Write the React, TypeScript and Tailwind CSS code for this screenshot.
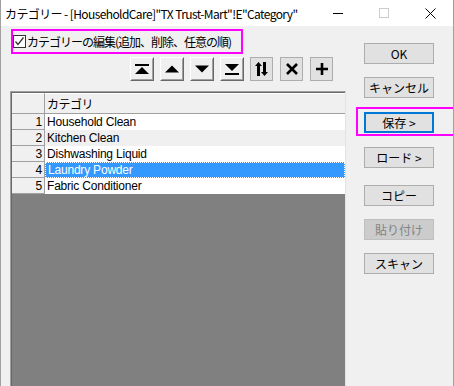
import React from "react";

const rows = [
  "Household Clean",
  "Kitchen Clean",
  "Dishwashing Liquid",
  "Laundry Powder",
  "Fabric Conditioner",
];

function RaisedBtn({ children }: { children: React.ReactNode }) {
  return (
    <div className="w-[24px] h-[24px] border border-t-white border-l-white border-r-[#696969] border-b-[#696969] bg-[#f0f0f0]">
      <div className="w-full h-full border border-t-[#f0f0f0] border-l-[#f0f0f0] border-r-[#a0a0a0] border-b-[#a0a0a0] flex items-center justify-center">
        {children}
      </div>
    </div>
  );
}

function FlatBtn({ children }: { children: React.ReactNode }) {
  return (
    <div className="w-[23px] h-[24px] border border-[#adadad] bg-[#e1e1e1] flex items-center justify-center">
      {children}
    </div>
  );
}

function SideBtn({
  label,
  disabled,
}: {
  label: string;
  disabled?: boolean;
}) {
  return (
    <div
      className={
        disabled
          ? "w-[70px] h-[21px] border border-[#bfbfbf] bg-[#cccccc] text-[#838383] flex items-center justify-center text-[12px]"
          : "w-[70px] h-[21px] border border-[#adadad] bg-[#e1e1e1] text-black flex items-center justify-center text-[12px]"
      }
    >
      {label}
    </div>
  );
}

export default function App() {
  return (
    <div className="w-[454px] h-[386px] overflow-hidden bg-[#f0f0f0] border-x border-[#a0a0a0] flex flex-col font-['Noto_Sans_CJK_JP',sans-serif] text-black">
      {/* Title bar */}
      <div className="h-[26px] bg-white flex items-center shrink-0">
        <div className="pl-[4px] pt-[2px] text-[12px] leading-none whitespace-nowrap flex-1 tracking-[-0.6px]">
          カテゴリー - [HouseholdCare]"TX Trust-Mart"!E"Category"
        </div>
        <div className="w-[46px] h-full flex items-center justify-center">
          <div className="w-[10px] h-px bg-black" />
        </div>
        <div className="w-[46px] h-full flex items-center justify-center">
          <div className="w-[10px] h-[10px] border border-[#cccccc]" />
        </div>
        <div className="w-[46px] h-full flex items-center justify-center">
          <svg width="11" height="11" viewBox="0 0 11 11">
            <path d="M0.5 0.5 L10.5 10.5 M10.5 0.5 L0.5 10.5" stroke="#000" strokeWidth="1" />
          </svg>
        </div>
      </div>

      {/* Body */}
      <div className="flex flex-1 min-h-0">
        {/* Left column */}
        <div className="w-[345px] flex flex-col">
          <div className="mt-[3px] ml-[10px] w-[232px] h-[25px] border-2 border-[#ff00ff] flex items-center">
            <div className="ml-[0px] w-[13px] h-[13px] border border-[#333333] bg-white flex items-center justify-center">
              <svg width="11" height="11" viewBox="0 0 11 11">
                <path d="M1.5 5.5 L4 8.5 L9.5 1.5" stroke="#333" strokeWidth="1.3" fill="none" />
              </svg>
            </div>
            <span className="ml-[1px] text-[12px] leading-none whitespace-nowrap tracking-[-1px]">
              カテゴリーの編集(追加、削除、任意の順)
            </span>
          </div>

          {/* Toolbar */}
          <div className="mt-[3px] ml-[129px] flex">
            <div className="w-[30px]">
              <RaisedBtn>
                <svg width="14" height="11" viewBox="0 0 14 11">
                  <rect x="0" y="0" width="14" height="2" fill="#000" />
                  <path d="M0 10 L14 10 L7 3 Z" fill="#000" />
                </svg>
              </RaisedBtn>
            </div>
            <div className="w-[30px]">
              <RaisedBtn>
                <svg width="14" height="8" viewBox="0 0 14 8">
                  <path d="M0 7.5 L14 7.5 L7 0.5 Z" fill="#000" />
                </svg>
              </RaisedBtn>
            </div>
            <div className="w-[30px]">
              <RaisedBtn>
                <svg width="14" height="8" viewBox="0 0 14 8">
                  <path d="M0 0.5 L14 0.5 L7 7.5 Z" fill="#000" />
                </svg>
              </RaisedBtn>
            </div>
            <div className="w-[30px]">
              <RaisedBtn>
                <svg width="14" height="11" viewBox="0 0 14 11">
                  <path d="M0 0 L14 0 L7 7 Z" fill="#000" />
                  <rect x="0" y="9" width="14" height="2" fill="#000" />
                </svg>
              </RaisedBtn>
            </div>
            <div className="w-[30px]">
              <FlatBtn>
                <svg width="13" height="14" viewBox="0 0 13 14">
                  <path d="M3.5 0 L7 4 L5 4 L5 14 L2 14 L2 4 L0 4 Z" fill="#000" />
                  <path d="M9.5 14 L13 10 L11 10 L11 0 L8 0 L8 10 L6 10 Z" fill="#000" />
                </svg>
              </FlatBtn>
            </div>
            <div className="w-[30px]">
              <FlatBtn>
                <svg width="12" height="12" viewBox="0 0 12 12">
                  <path d="M1 1 L11 11 M11 1 L1 11" stroke="#000" strokeWidth="2.6" />
                </svg>
              </FlatBtn>
            </div>
            <div className="w-[30px]">
              <FlatBtn>
                <svg width="12" height="12" viewBox="0 0 12 12">
                  <path d="M6 0 L6 12 M0 6 L12 6" stroke="#000" strokeWidth="2.6" />
                </svg>
              </FlatBtn>
            </div>
          </div>

          {/* Grid */}
          <div className="mt-[10px] ml-[9px] w-[336px] flex-1 border-l border-t border-[#a0a0a0] border-r border-r-[#e3e3e3] flex flex-col">
            <div className="flex-1 border-l border-t border-[#696969] bg-[#808080] flex flex-col font-['Liberation_Sans','Noto_Sans_CJK_JP',sans-serif] text-[12px] tracking-[-0.2px]">
              {/* Header row */}
              <div className="flex h-[21px] bg-[#f0f0f0]">
                <div className="w-[33px] border-r border-b border-[#a0a0a0] border-t border-t-white" />
                <div className="flex-1 border-b border-[#a0a0a0] border-t border-t-white flex items-center pl-[2px] font-['Noto_Sans_CJK_JP',sans-serif] tracking-[-0.5px]">
                  カテゴリ
                </div>
              </div>
              {rows.map((r, i) => {
                const sel = i === 3;
                const bg = sel
                  ? "bg-[#3399ff] text-white border border-dotted border-white"
                  : i === 1
                  ? "bg-[#f0f0f0]"
                  : "bg-white";
                return (
                  <div key={r} className="flex h-[16px]">
                    <div className="w-[33px] bg-[#f0f0f0] border-r border-b border-[#a0a0a0] flex items-center justify-end pr-[2px] leading-none">
                      {i + 1}
                    </div>
                    <div className={"flex-1 flex items-center pl-[2px] leading-none whitespace-nowrap " + bg}>
                      {r}
                    </div>
                  </div>
                );
              })}
            </div>
          </div>
        </div>

        {/* Right column */}
        <div className="flex-1 flex flex-col pl-[18px] pt-[17px]">
          <SideBtn label="OK" />
          <div className="mt-[13px]">
            <SideBtn label="キャンセル" />
          </div>
          <div className="mt-[14px] relative">
            <div className="w-[70px] h-[21px] border-2 border-[#0078d7] bg-[#e1e1e1] flex items-center justify-center text-[12px]">
              保存 &gt;
            </div>
            <div className="absolute -left-[8px] -right-[8px] -top-[5px] -bottom-[3px] border-2 border-[#ff00ff]" />
          </div>
          <div className="mt-[14px]">
            <SideBtn label="ロード >" />
          </div>
          <div className="mt-[17px]">
            <SideBtn label="コピー" />
          </div>
          <div className="mt-[13px]">
            <SideBtn label="貼り付け" disabled />
          </div>
          <div className="mt-[13px]">
            <SideBtn label="スキャン" />
          </div>
        </div>
      </div>
    </div>
  );
}
